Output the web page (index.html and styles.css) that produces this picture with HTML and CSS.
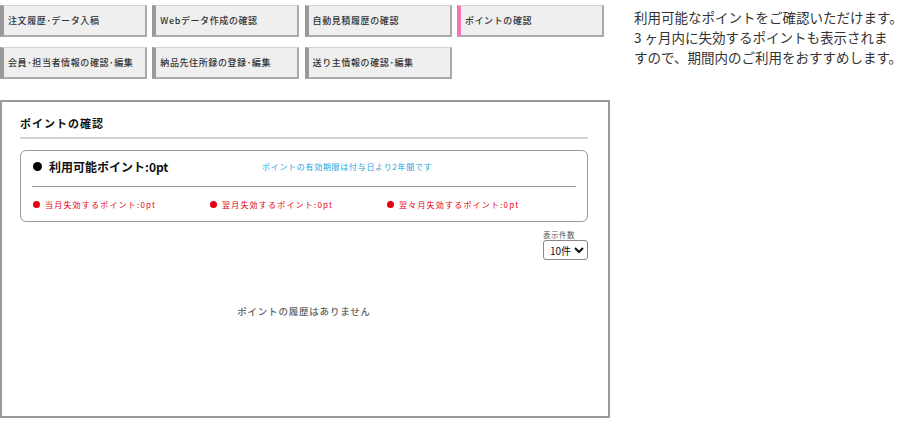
FILE: index.html
```html
<!DOCTYPE html>
<html>
    <head>
        <meta charset="UTF-8">
        <meta name="viewport" content="width=device-width, initial-scale=1.0">
        <link rel="stylesheet" href="styles.css">
        <title>ポイントの確認</title>
    </head>
    <body>

        <div id="page">
            <div id="main">
                <div class="menu">
                    <a class="menubtn" href="#">注文履歴･データ入稿</a>
                    <a class="menubtn" href="#">Webデータ作成の確認</a>
                    <a class="menubtn" href="#">自動見積履歴の確認</a>
                    <a class="menubtn active" href="#">ポイントの確認</a>
                    <a class="menubtn" href="#">会員･担当者情報の確認･編集</a>
                    <a class="menubtn" href="#">納品先住所録の登録･編集</a>
                    <a class="menubtn" href="#">送り主情報の確認･編集</a>
                </div>

                <div class="pointbox">
                    <h2 class="boxtitle">ポイントの確認</h2>

                    <div class="pointcard">
                        <div class="cardhead">
                            <span class="total"><span class="dot"></span>利用可能ポイント:0pt</span>
                            <span class="limit">ポイントの有効期限は付与日より2年間です</span>
                        </div>
                        <div class="expire">
                            <span class="expitem"><span class="reddot"></span>当月失効するポイント:0pt</span>
                            <span class="expitem"><span class="reddot"></span>翌月失効するポイント:0pt</span>
                            <span class="expitem"><span class="reddot"></span>翌々月失効するポイント:0pt</span>
                        </div>
                    </div>

                    <div class="perpage">
                        <label for="count">表示件数</label>
                        <select id="count">
                            <option>10件</option>
                            <option>20件</option>
                            <option>50件</option>
                        </select>
                    </div>

                    <p class="empty">ポイントの履歴はありません</p>
                </div>
            </div>

            <div id="side">
                利用可能なポイントをご確認いただけます。<br>
                3 ヶ月内に失効するポイントも表示されま<br>
                すので、期間内のご利用をおすすめします。
            </div>
        </div>

    </body>
</html>
```

FILE: styles.css
```css
body {
    margin: 0;
    padding: 0;
    background: #fff;
    color: #333;
    font-family: "Noto Sans CJK JP", "Noto Sans", sans-serif;
    overflow: hidden;
}

#page {
    display: flex;
    align-items: flex-start;
}

#main {
    width: 610px;
    flex-shrink: 0;
}

.menu {
    display: flex;
    flex-wrap: wrap;
    column-gap: 5.3px;
    row-gap: 10px;
    padding-top: 5px;
}

.menubtn {
    box-sizing: border-box;
    display: flex;
    align-items: center;
    width: 147px;
    height: 32px;
    padding-left: 4px;
    background: #efefef;
    border: 1px solid #d4d4d4;
    border-right: 2px solid #aaa;
    border-bottom: 2px solid #aaa;
    border-left: 4px solid #999;
    color: #333;
    font-size: 9px;
    font-weight: 500;
    letter-spacing: 0.6px;
    text-decoration: none;
}

.menubtn.active {
    border-left-color: #f574b9;
}

.pointbox {
    box-sizing: border-box;
    margin-top: 21px;
    width: 610px;
    height: 318px;
    padding: 14px 20px 0 18px;
    border: 2px solid #999;
}

.boxtitle {
    margin: 0;
    padding-bottom: 6px;
    border-bottom: 2px solid #d3d3d3;
    font-size: 11px;
    line-height: 15px;
    letter-spacing: 1px;
    font-weight: bold;
    color: #111;
}

.pointcard {
    margin-top: 11px;
    padding: 0 11px;
    border: 1px solid #999;
    border-radius: 6px;
}

.cardhead {
    box-sizing: border-box;
    display: flex;
    align-items: center;
    height: 36px;
    padding-bottom: 5px;
    border-bottom: 1px solid #999;
}

.total {
    display: flex;
    align-items: center;
    width: 230px;
    font-size: 12px;
    font-weight: bold;
    color: #111;
}

.dot {
    width: 9px;
    height: 9px;
    margin-left: 1px;
    margin-right: 7px;
    border-radius: 50%;
    background: #000;
}

.limit {
    font-size: 8px;
    letter-spacing: 0.7px;
    color: #2a9fe0;
}

.expire {
    box-sizing: border-box;
    display: flex;
    align-items: center;
    height: 34px;
    padding-bottom: 0;
}

.expitem {
    display: flex;
    align-items: center;
    width: 177px;
    font-size: 8px;
    letter-spacing: 1.2px;
    color: #e60012;
}

.reddot {
    width: 7px;
    height: 7px;
    margin-left: 1px;
    margin-right: 5px;
    border-radius: 50%;
    background: #e60012;
}

.perpage {
    display: flex;
    flex-direction: column;
    align-items: flex-start;
    margin-top: 8px;
    margin-left: auto;
    width: 45px;
}

.perpage label {
    font-size: 7.5px;
    line-height: 10px;
    letter-spacing: 0.5px;
    color: #555;
}

.perpage select {
    box-sizing: border-box;
    width: 45px;
    height: 20px;
    padding: 0 0 0 2px;
    border: 1px solid #888;
    border-radius: 3px;
    background: #fff;
    font-family: "Noto Sans CJK JP", sans-serif;
    font-size: 10px;
    color: #111;
}

.empty {
    margin: 44px 0 0;
    text-align: center;
    font-size: 9.5px;
    line-height: 14px;
    letter-spacing: 0.8px;
    font-weight: 500;
    color: #666;
}

#side {
    margin-left: 24px;
    padding-top: 7px;
    font-size: 13.5px;
    line-height: 20px;
    color: #333;
    white-space: nowrap;
}
```
